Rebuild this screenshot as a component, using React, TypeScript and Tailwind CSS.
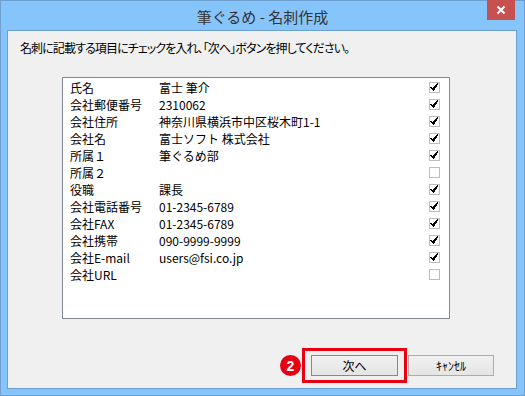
import React from "react";

const rows: { label: string; value: string; checked: boolean }[] = [
  { label: "氏名", value: "富士 筆介", checked: true },
  { label: "会社郵便番号", value: "2310062", checked: true },
  { label: "会社住所", value: "神奈川県横浜市中区桜木町1-1", checked: true },
  { label: "会社名", value: "富士ソフト 株式会社", checked: true },
  { label: "所属１", value: "筆ぐるめ部", checked: true },
  { label: "所属２", value: "", checked: false },
  { label: "役職", value: "課長", checked: true },
  { label: "会社電話番号", value: "01-2345-6789", checked: true },
  { label: "会社FAX", value: "01-2345-6789", checked: true },
  { label: "会社携帯", value: "090-9999-9999", checked: true },
  { label: "会社E-mail", value: "users@fsi.co.jp", checked: true },
  { label: "会社URL", value: "", checked: false },
];

function Check({ checked }: { checked: boolean }) {
  return (
    <div className="w-[11px] h-[11px] border border-[#bdbdbd] bg-white flex items-center justify-center">
      {checked && (
        <svg width="9" height="9" viewBox="0 0 9 9" shapeRendering="crispEdges">
          <path d="M0 4h2v1H0zM1 5h2v1H1zM2 6h2v1H2zM3 7h1v1H3zM3 4h1v2H3zM4 3h1v4H4zM5 2h1v3H5zM6 1h1v3H6zM7 0h1v2H7z" fill="#000" />
        </svg>
      )}
    </div>
  );
}

export default function App() {
  return (
    <div
      className="w-[525px] h-[396px] bg-[#86c5fc] border border-[#6f9fcc] flex flex-col"
      style={{ fontFamily: '"Noto Sans CJK JP", "Noto Sans", sans-serif' }}
    >
      <div className="h-[29px] relative flex items-center justify-center shrink-0">
        <span className="text-[15px] text-[#333] leading-none pt-[1px]">筆ぐるめ - 名刺作成</span>
        <div className="absolute right-[9px] top-[-1px] w-[28px] h-[20px] bg-[#c75050] flex items-center justify-center">
          <svg width="10" height="10" viewBox="0 0 10 10">
            <path d="M1.5 1.5L8.5 8.5M8.5 1.5L1.5 8.5" stroke="#fff" strokeWidth="2" />
          </svg>
        </div>
      </div>
      <div className="ml-[6px] mr-[7px] h-[359px] border border-[#6a9fd0] bg-[#f0f0f0] flex flex-col">
        <div className="pl-[12px] pt-[8px] h-[46px] text-[12px] text-[#000] leading-[18px] tracking-[-0.9px] [font-feature-settings:'palt']">
          名刺に記載する項目にチェックを入れ、「次へ」ボタンを押してください。
        </div>
        <div className="ml-[54px] w-[388px] h-[242px] border border-[#828790] bg-white pt-[1px] flex flex-col">
          {rows.map((r) => (
            <div key={r.label} className="h-[17px] shrink-0 flex items-center text-[12px] text-[#000] leading-none">
              <div className="w-[96px] pl-[7px]">{r.label}</div>
              <div className="w-[270px]">{r.value}</div>
              <Check checked={r.checked} />
            </div>
          ))}
        </div>
        <div className="flex items-center mt-[29px] ml-[272px]">
          <div className="w-[21px] h-[21px] rounded-full bg-[#e60012] flex items-center justify-center text-white text-[14px] font-bold leading-none mr-[1px]">
            <span style={{ fontFamily: '"Liberation Sans", sans-serif' }}>2</span>
          </div>
          <div className="border-[3px] border-[#e60012] w-[105px] h-[35px] flex items-center justify-center">
            <div className="w-[87px] h-[21px] border border-[#3c9bf4] bg-gradient-to-b from-[#f0f0f0] to-[#e5e5e5] flex items-center justify-center text-[12px] text-[#000] leading-none">
              次へ
            </div>
          </div>
          <div className="ml-[1px] w-[86px] h-[21px] border border-[#acacac] bg-gradient-to-b from-[#f0f0f0] to-[#e5e5e5] flex items-center justify-center text-[12px] text-[#000] leading-none">
            ｷｬﾝｾﾙ
          </div>
        </div>
      </div>
    </div>
  );
}
